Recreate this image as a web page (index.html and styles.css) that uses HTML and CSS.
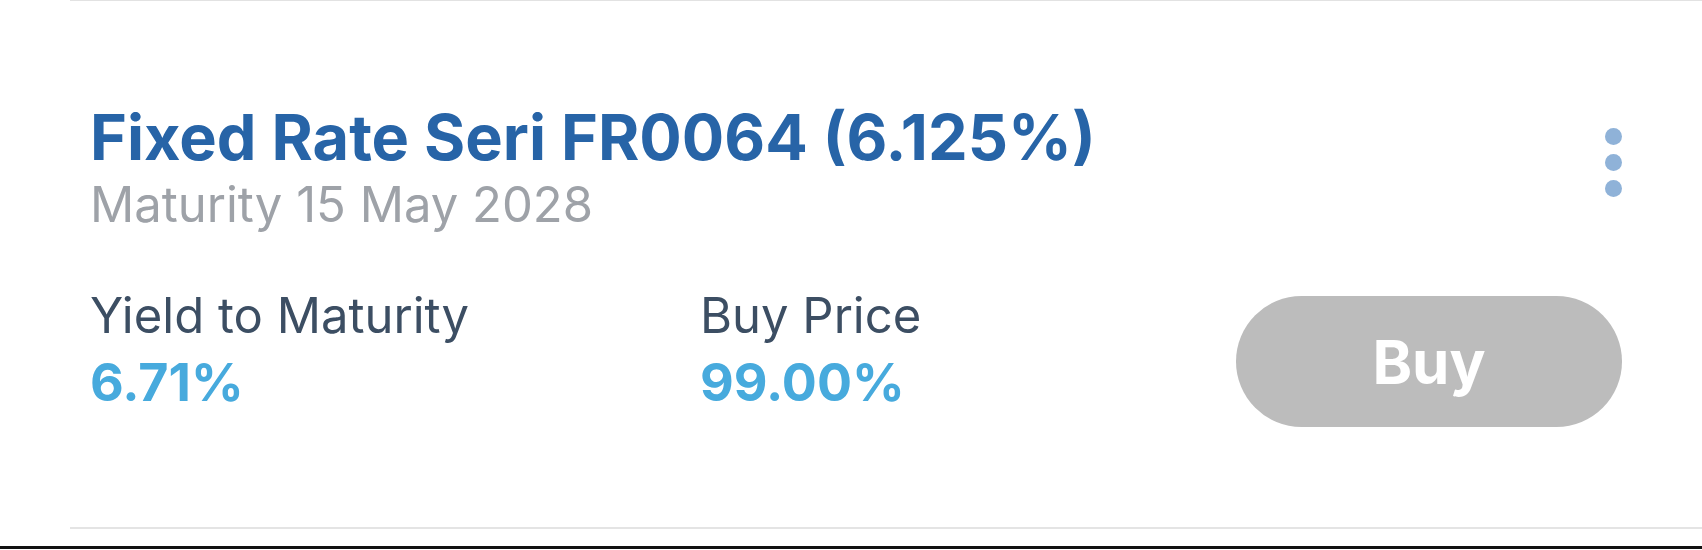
FILE: index.html
```html
<!DOCTYPE html>
<html lang="en">

<head>
    <meta charset="UTF-8">
    <meta name="viewport" content="width=device-width, initial-scale=1.0">
    <title>Obligasi</title>
    <link rel="stylesheet" href="styles.css">
</head>

<body>
    <div class="bond-list">
        <div class="bond">
            <div class="bond-head">
                <div>
                    <h2 class="bond-name">Fixed Rate Seri FR0064 (6.125%)</h2>
                    <p class="bond-maturity">Maturity 15 May 2028</p>
                </div>
                <button class="more" aria-label="More options">
                    <span></span><span></span><span></span>
                </button>
            </div>

            <div class="bond-stats">
                <div class="stat">
                    <div class="stat-label">Yield to Maturity</div>
                    <div class="stat-value">6.71%</div>
                </div>
                <div class="stat">
                    <div class="stat-label">Buy Price</div>
                    <div class="stat-value">99.00%</div>
                </div>
                <button class="buy" disabled>Buy</button>
            </div>
        </div>
    </div>

    <div class="home-bar"></div>
</body>

</html>
```

FILE: styles.css
```css
body {
    margin: 0;
    background-color: #fff;
    font-family: Inter, "Noto Sans", sans-serif;
}

.bond-list {
    margin-left: 70px;
}

.bond {
    border-top: 1px solid #e2e2e2;
    border-bottom: 2px solid #e4e4e4;
    padding: 103px 80px 100px 20px;
}

.bond-head {
    display: flex;
    justify-content: space-between;
    align-items: flex-start;
}

.bond-name {
    margin: 0;
    font-size: 63px;
    line-height: 67px;
    font-weight: 700;
    color: #2764a7;
}

.bond-maturity {
    margin: 7px 0 0;
    font-size: 49px;
    line-height: 53px;
    color: #9ea2a8;
}

.more {
    display: flex;
    flex-direction: column;
    gap: 9px;
    margin-top: 24px;
    padding: 0;
    border: none;
    background: none;
    cursor: pointer;
}

.more span {
    width: 17px;
    height: 17px;
    border-radius: 50%;
    background-color: #8fb2d8;
}

.bond-stats {
    display: grid;
    grid-template-columns: 610px 1fr 386px;
    align-items: start;
    margin-top: 58px;
}

.stat-label {
    font-size: 49px;
    line-height: 53px;
    color: #3c4e63;
}

.stat-value {
    margin-top: 14px;
    font-size: 52px;
    line-height: 53px;
    font-weight: 700;
    color: #47aadd;
}

.buy {
    height: 131px;
    margin-top: 7px;
    border: none;
    border-radius: 66px;
    background-color: #bcbcbc;
    color: #fff;
    font-family: inherit;
    font-size: 60px;
    font-weight: 700;
}

.home-bar {
    height: 3px;
    margin-top: 17px;
    background-color: #111;
}
```
